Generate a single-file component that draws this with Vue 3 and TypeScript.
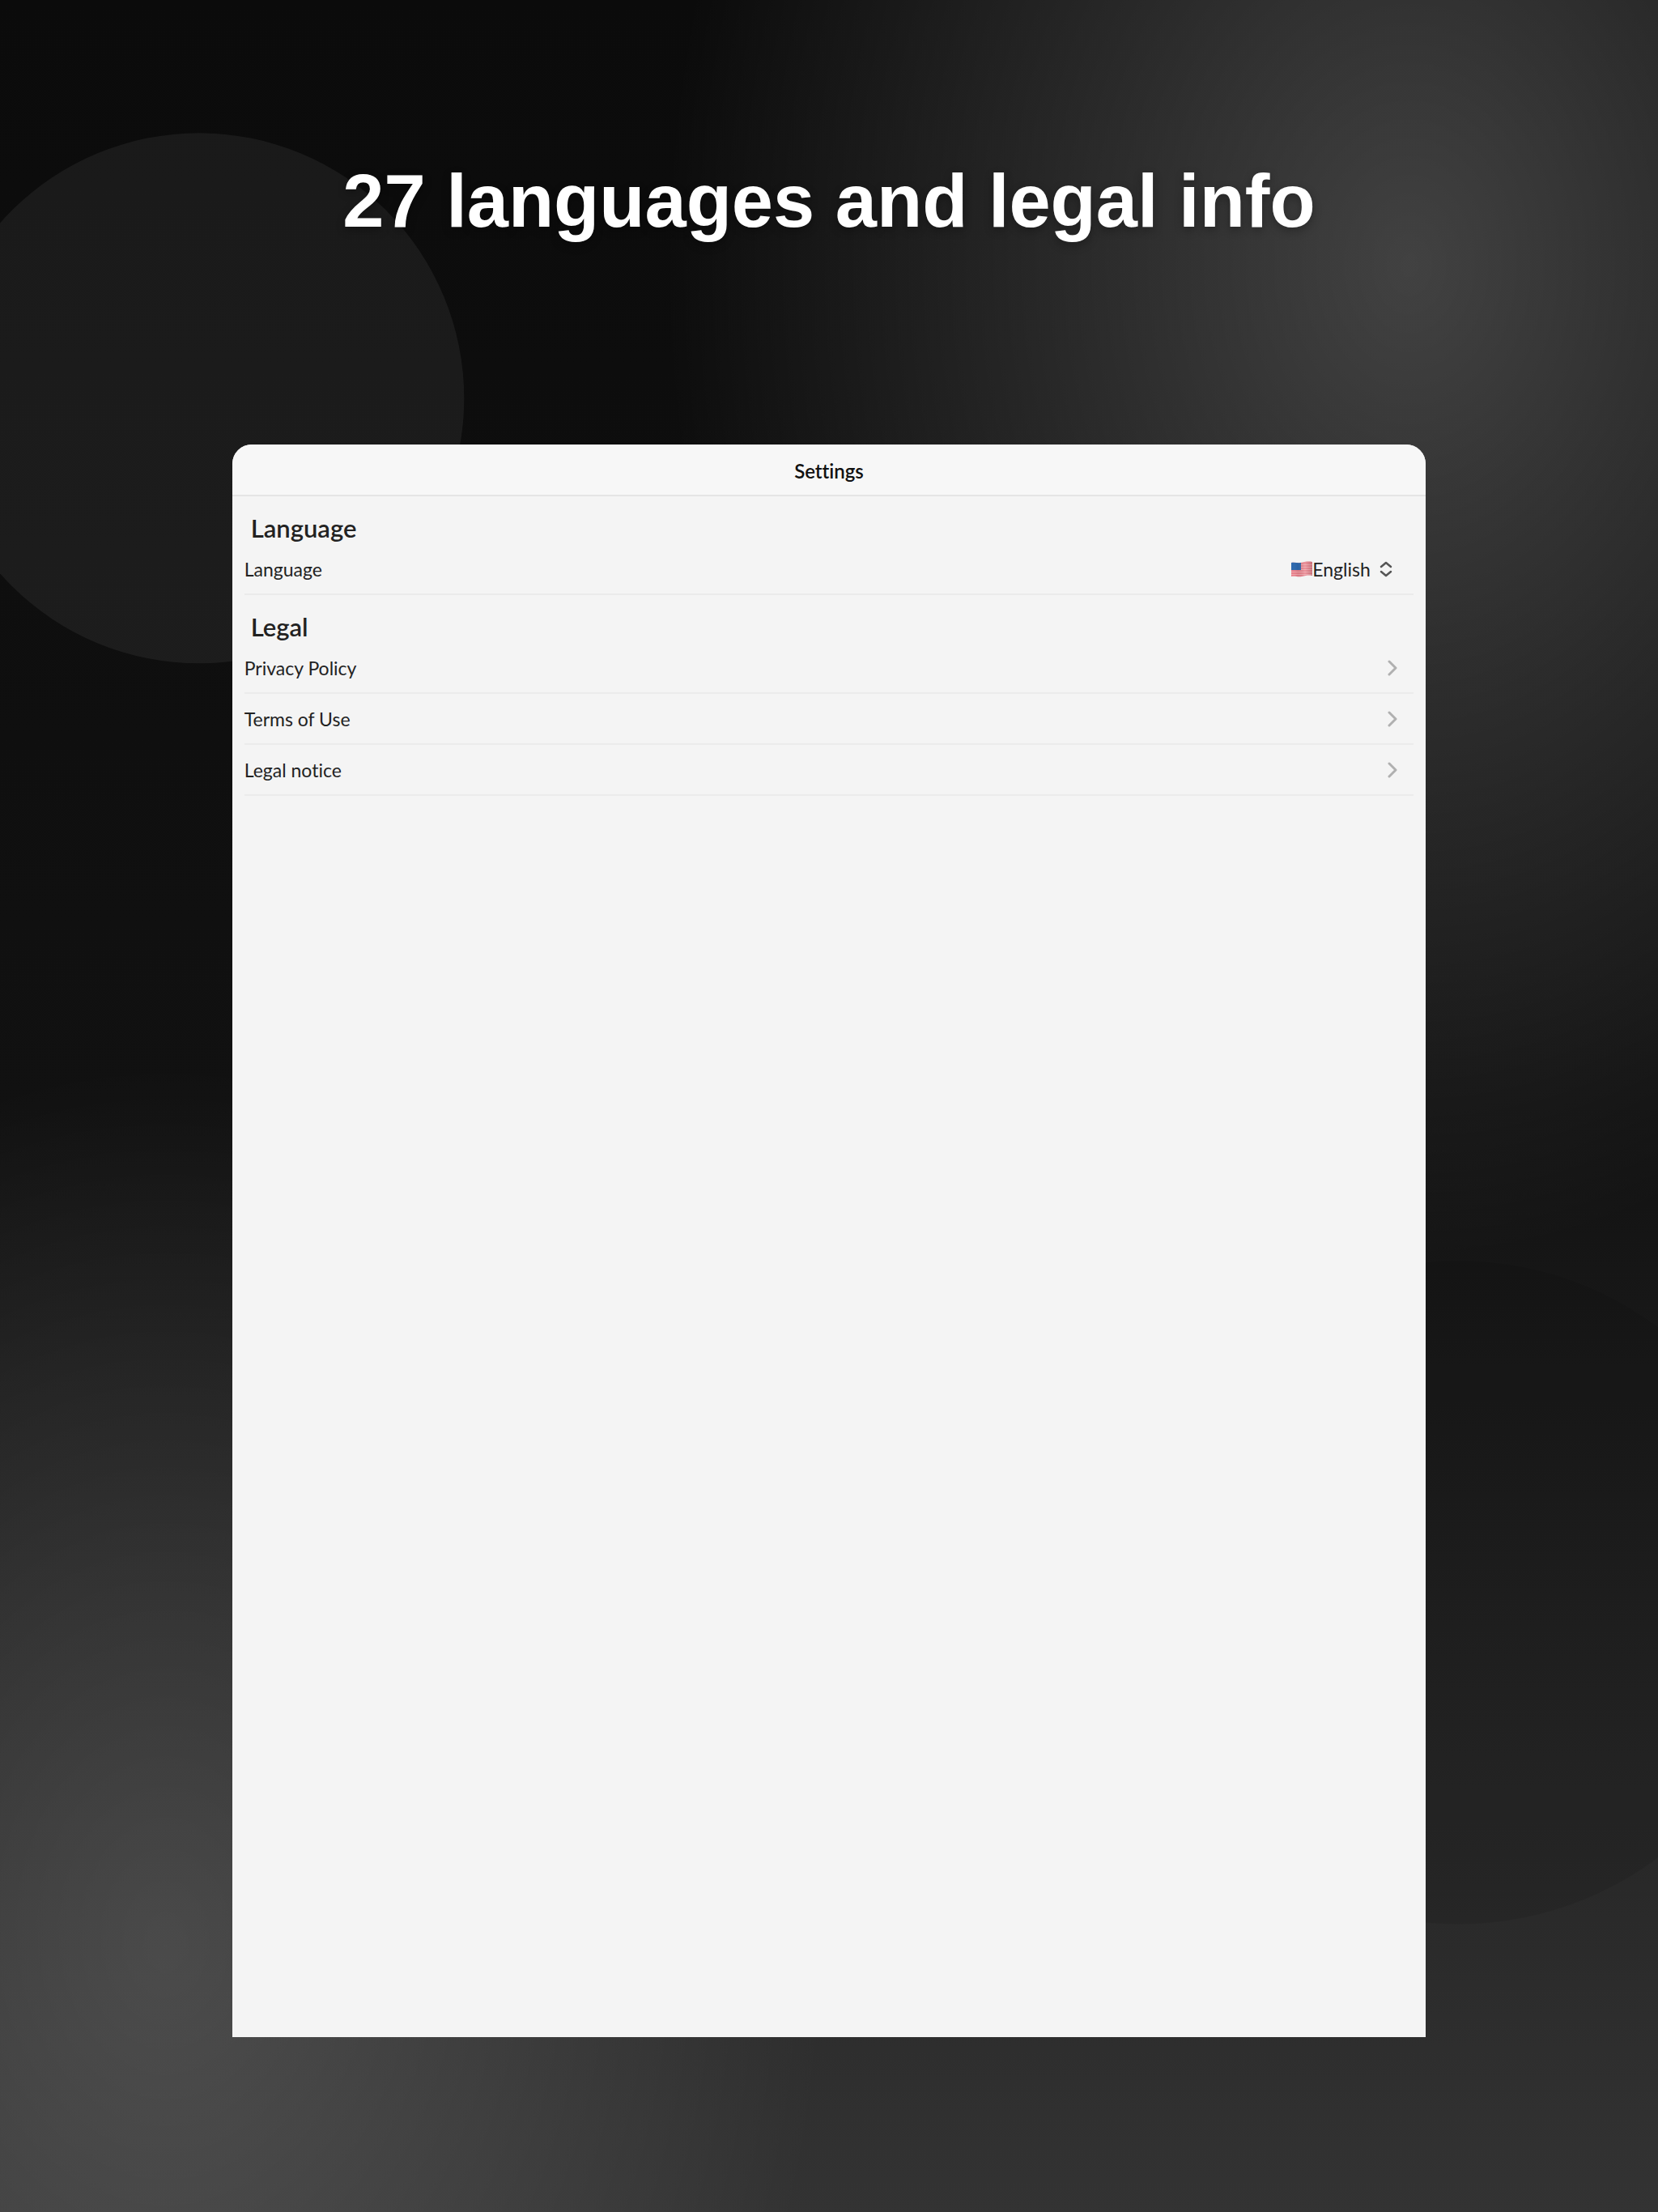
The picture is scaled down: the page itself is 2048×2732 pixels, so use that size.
<script setup lang="ts">
import { ref } from 'vue'

interface LegalLink {
  label: string
  href: string
}

const language = ref<string>('English')
const languages: string[] = ['English']

const legalLinks: LegalLink[] = [
  { label: 'Privacy Policy', href: '#privacy' },
  { label: 'Terms of Use', href: '#terms' },
  { label: 'Legal notice', href: '#notice' },
]
</script>

<template>
  <main class="page">
    <span class="disc disc-light" aria-hidden="true"></span>
    <span class="disc disc-dark" aria-hidden="true"></span>

    <h1 class="headline">27 languages and legal info</h1>

    <section class="card">
      <header class="bar">
        <h2 class="bar-title">Settings</h2>
      </header>

      <section class="group">
        <h3 class="group-title">Language</h3>
        <div class="row">
          <label for="language">Language</label>
          <div class="picker">
            <svg class="flag" viewBox="0 0 26 20" aria-hidden="true">
              <defs>
                <clipPath id="cloth">
                  <path d="M0 2 C5 1 8 3 13 1.800 S21 0 26 1 V18 C21 17 18 18 13 19 S5 18 0 19 Z" />
                </clipPath>
                <linearGradient id="shade" x1="0" x2="1" y1="0" y2="0">
                  <stop offset="0" stop-color="#fff" stop-opacity="0" />
                  <stop offset="0.3" stop-color="#000" stop-opacity="0.06" />
                  <stop offset="0.65" stop-color="#fff" stop-opacity="0.15" />
                  <stop offset="1" stop-color="#000" stop-opacity="0.14" />
                </linearGradient>
              </defs>
              <g clip-path="url(#cloth)">
                <rect width="26" height="20" fill="#e9808b" />
                <path
                  d="M0 4.500 H26 M0 7.500 H26 M0 10.500 H26 M0 13.500 H26 M0 16.500 H26"
                  stroke="#f0a5ab"
                  stroke-width="1.200"
                />
                <rect width="12" height="11" fill="#2d68ae" />
                <rect width="26" height="20" fill="url(#shade)" />
              </g>
            </svg>
            <select id="language" v-model="language" class="select">
              <option v-for="name in languages" :key="name" :value="name">{{ name }}</option>
            </select>
            <svg class="updown" viewBox="0 0 16 20" aria-hidden="true">
              <path d="M2 7 L8 2 L14 7 M2 13 L8 18 L14 13" />
            </svg>
          </div>
        </div>
      </section>

      <section class="group">
        <h3 class="group-title">Legal</h3>
        <a v-for="link in legalLinks" :key="link.label" class="row" :href="link.href">
          <span>{{ link.label }}</span>
          <svg class="chevron" viewBox="0 0 12 20" aria-hidden="true">
            <path d="M2 2 L10 10 L2 18" />
          </svg>
        </a>
      </section>
    </section>
  </main>
</template>

<style>
body {
  margin: 0;
  background: #333333;
}
</style>

<style scoped>
.page {
  position: relative;
  box-sizing: border-box;
  min-height: 100vh;
  padding: 200px 14% 215px;
  overflow: hidden;
  background:
    radial-gradient(ellipse 45% 45% at 85% 12%, rgba(255, 255, 255, 0.22), rgba(255, 255, 255, 0) 100%),
    radial-gradient(ellipse 40% 40% at 10% 88%, rgba(255, 255, 255, 0.15), rgba(255, 255, 255, 0) 100%),
    linear-gradient(180deg, #0b0b0b 0%, #111111 50%, #333333 100%);
  font-family: Lato, "Open Sans", sans-serif;
  font-variant-ligatures: none;
}

.disc {
  position: absolute;
  aspect-ratio: 1;
  border-radius: 50%;
  transform: translate(-50%, -50%);
}

.disc-light {
  left: 12%;
  top: 18%;
  width: 32%;
  background: rgba(255, 255, 255, 0.06);
}

.disc-dark {
  left: 88%;
  top: 72%;
  width: 40%;
  background: rgba(0, 0, 0, 0.08);
}

.headline {
  position: relative;
  margin: 0 0 253px;
  font-family: "Liberation Sans", Arial, sans-serif;
  font-size: 92px;
  line-height: 96px;
  font-weight: 700;
  color: #ffffff;
  text-align: center;
  white-space: nowrap;
  text-shadow: 0 4px 12px rgba(0, 0, 0, 0.3);
}

.card {
  position: relative;
  aspect-ratio: 1475 / 1968;
  overflow: hidden;
  border-radius: 24px 24px 0 0;
  background: #f4f4f4;
  color: #222222;
}

.bar {
  display: flex;
  align-items: center;
  justify-content: center;
  height: 62px;
  border-bottom: 2px solid #e5e5e5;
  background: #f7f7f7;
}

.bar-title {
  margin: 0;
  padding-top: 4px;
  font-size: 24px;
  line-height: 28px;
  font-weight: 600;
  color: #111111;
}

.group {
  padding: 19px 15px 0;
}

.group-title {
  margin: 0;
  padding: 0 8px;
  font-size: 31px;
  line-height: 40px;
  font-weight: 600;
}

.row {
  box-sizing: border-box;
  display: flex;
  align-items: center;
  justify-content: space-between;
  height: 63px;
  padding-right: 20px;
  border-bottom: 2px solid #ebebeb;
  font-size: 23px;
  line-height: 28px;
  color: inherit;
  text-decoration: none;
}

.picker {
  display: flex;
  align-items: center;
  padding-right: 6px;
}

.flag {
  width: 26px;
  height: 20px;
}

.select {
  appearance: none;
  margin: 0 11px 0 0;
  padding: 0;
  border: 0;
  background: transparent;
  font: inherit;
  color: inherit;
}

.updown {
  width: 16px;
  height: 20px;
  fill: none;
  stroke: #555555;
  stroke-width: 2.500;
  stroke-linecap: round;
  stroke-linejoin: round;
}

.chevron {
  width: 12px;
  height: 20px;
  fill: none;
  stroke: #b0b0b0;
  stroke-width: 3;
  stroke-linecap: round;
  stroke-linejoin: round;
}
</style>
